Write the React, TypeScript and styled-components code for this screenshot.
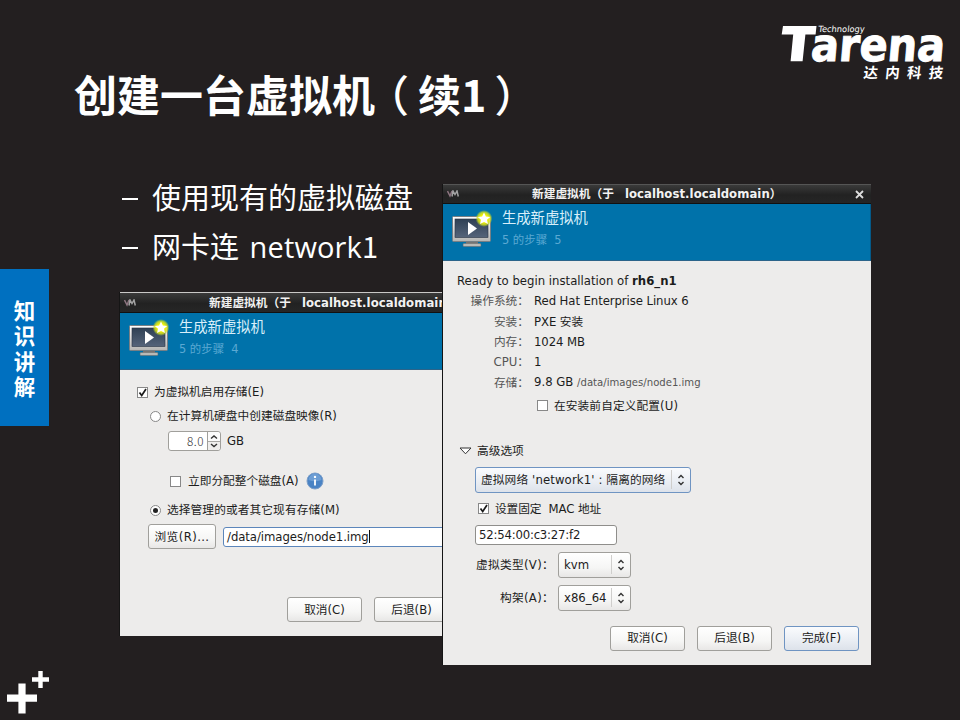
import React from 'react';
import styled, { createGlobalStyle } from 'styled-components';

const Global = createGlobalStyle`
  * { box-sizing: border-box; }
  body { margin: 0; background: #231f20; }
`;

const Slide = styled.div`
  position: relative;
  display: flex;
  width: 960px;
  height: 720px;
  overflow: hidden;
  background: #231f20;
  color: #fff;
  font-family: "Open Sans", "Noto Sans CJK SC", sans-serif;
`;

const Rail = styled.aside`
  display: flex;
  flex-direction: column;
  justify-content: space-between;
  width: 49px;
  padding: 269px 0 6px;
`;

const Tab = styled.div`
  display: flex;
  flex-direction: column;
  align-items: center;
  justify-content: center;
  height: 157px;
  background: #0070c0;
  font: 700 21.5px/25.5px "Noto Sans CJK SC", sans-serif;
`;

const Main = styled.main`
  flex: 1;
  padding: 0 11px 0 25px;
`;

const Header = styled.header`
  display: flex;
  justify-content: space-between;
  height: 171px;
`;

const Title = styled.h1`
  margin: 61px 0 0;
  font: 700 43px/64px "Noto Sans CJK SC", sans-serif;
  white-space: nowrap;
`;

const Nudge = styled.span<{ $x: number }>`
  margin-left: ${p => p.$x}px;
  margin-right: ${p => -p.$x}px;
  font-weight: 500;
`;

const Bullets = styled.ul`
  margin: 0;
  padding: 0 0 0 48px;
  list-style: none;
`;

const Bullet = styled.li`
  display: flex;
  align-items: center;
  height: 49px;
  gap: 14px;
  font-size: 29px;
  white-space: pre;
  &::before { content: ""; width: 16px; height: 2px; margin-top: 6px; background: #fff; }
`;

const Latin = styled.span`
  margin-left: 3px;
  letter-spacing: .15px;
`;

const Footed = styled.span`
  font-family: "Noto Sans CJK SC", sans-serif;
`;

const Window = styled.section<{ $x: number; $y: number; $h: number }>`
  position: absolute;
  left: ${p => p.$x}px;
  top: ${p => p.$y}px;
  width: 429px;
  height: ${p => p.$h}px;
  display: flex;
  flex-direction: column;
  overflow: hidden;
  border-left: 1px solid #151515;
  background: #edeceb;
  color: #1c1c1c;
  font: 11.7px/16px "DejaVu Sans", "Noto Sans CJK SC", sans-serif;
  white-space: pre;
`;

const Stack = styled.div`
  position: absolute;
  left: 0;
  top: 0;
  width: 871px;
  height: 720px;
  overflow: hidden;
`;

const TitleBar = styled.div<{ $lit?: boolean }>`
  display: flex;
  flex: none;
  align-items: center;
  height: ${p => (p.$lit ? 21 : 20)}px;
  padding: 0 7px 0 4px;
  border-top: 1px solid ${p => (p.$lit ? '#c9c8c7' : '#555')};
  border-bottom: 1px solid #111;
  background: linear-gradient(#3a3a3a, #222 55%, #262626);
  color: #f2f2f2;
  font-weight: 700;
`;

const Caption = styled.span`
  flex: 1;
  padding-left: 73px;
`;

const Host = styled.span`
  margin-left: 7px;
  letter-spacing: .05px;
`;

const Banner = styled.div`
  display: flex;
  flex: none;
  height: 57px;
  padding: 5px 0 0 8px;
  gap: 9px;
  border-bottom: 1px solid #2b648a;
  border-right: 1px solid #045988;
  background: #0072aa;
`;

const BannerText = styled.div`
  color: #d9effa;
  font-size: 14.3px;
  line-height: 18px;
`;

const Step = styled.div`
  margin-top: 4px;
  color: #5ba9d3;
  font-size: 11.4px;
  line-height: 18px;
`;

const Body = styled.div`
  flex: 1;
  padding-top: 10px;
`;

const Row = styled.div<{ $h: number; $x?: number; $top?: number; $gap?: number }>`
  display: flex;
  align-items: center;
  height: ${p => p.$h}px;
  margin-top: ${p => p.$top ?? 0}px;
  padding-left: ${p => p.$x ?? 0}px;
  gap: ${p => p.$gap ?? 0}px;
`;

const Label = styled.span<{ $w: number; $dim?: boolean }>`
  width: ${p => p.$w}px;
  text-align: right;
  color: ${p => (p.$dim ? '#555' : 'inherit')};
`;

const Txt = styled.span<{ $ls?: number }>`
  letter-spacing: ${p => p.$ls ?? 0}px;
`;

const Thin = styled.span`
  color: #333;
  font-weight: 300;
  font-family: "Noto Sans CJK SC", sans-serif;
  letter-spacing: .5px;
`;

const Small = styled.span`
  color: #555;
  font-size: 10.1px;
`;

const Control = styled.div<{ $w: number; $h: number; $blue?: boolean }>`
  display: flex;
  align-items: center;
  width: ${p => p.$w}px;
  height: ${p => p.$h}px;
  border: 1px solid ${p => (p.$blue ? '#6f94c2' : '#a09f9b')};
  border-radius: 3px;
  background: ${p => (p.$blue ? 'linear-gradient(#fafbfd, #e9edf3 60%, #dde2ea)' : 'linear-gradient(#fff, #f6f6f5 60%, #e8e7e6)')};
`;

const Select = styled(Control)`
  justify-content: space-between;
  padding-left: 5px;
`;

const Button = styled(Control)`
  justify-content: center;
  flex: none;
`;

const Input = styled(Control)`
  padding-left: 3px;
  border-color: ${p => (p.$blue ? '#5c86bb' : '#8f8e8b')};
  background: #fff;
`;

const Arrows = styled.span`
  display: flex;
  align-items: center;
  justify-content: center;
  width: 19px;
  height: 19px;
  border-left: 1px solid #cfcecc;
`;

const Check = styled.span`
  display: flex;
  width: 11px;
  height: 11px;
  border: 1px solid #888;
  background: #fff;
  svg { overflow: visible; }
`;

const Radio = styled(Check)`
  align-items: center;
  justify-content: center;
  border-radius: 50%;
`;

const Dot = styled.i`
  width: 5px;
  height: 5px;
  border-radius: 50%;
  background: #222;
`;

const Caret = styled.i`
  width: 1px;
  height: 13px;
  background: #111;
`;

const SpinBox = styled(Control)`
  justify-content: flex-end;
  background: #fff;
`;

const Spin = styled.span`
  display: flex;
  align-items: center;
  justify-content: center;
  width: 13px;
  height: 18px;
  margin-left: 3px;
  border-left: 1px solid #a09f9b;
  border-radius: 0 3px 3px 0;
  background: linear-gradient(#fbfbfb 48%, #a9a8a5 48%, #a9a8a5 54%, #efeeed 54%);
`;

const Marks = () => (
  <svg width="42" height="43" viewBox="0 0 42 43">
    <path d="M0 27.200h30M15 12.400v30" stroke="#fff" strokeWidth="7.2" />
    <path d="M25 8.5h17M33.5 0v17" stroke="#fff" strokeWidth="4.4" />
  </svg>
);

const Logo = () => (
  <svg width="170" height="66" viewBox="779 18 170 66" fill="#fff">
    <path d="M783 26h33.500l-.9 8.600h-10.200l-2.800 26.600h-12l2.600-26.600h-11.500z" />
    <text transform="translate(810 60.600) skewX(-5)" fontFamily="DejaVu Sans" fontSize="45.500" fontWeight="700" textLength="134" lengthAdjust="spacingAndGlyphs" stroke="#fff" strokeWidth="1">arena</text>
    <text transform="translate(818 32) skewX(-6)" fontFamily="DejaVu Sans" fontSize="8.500" textLength="46.500" lengthAdjust="spacingAndGlyphs">Technology</text>
    <text transform="translate(863 77.500) skewX(-6)" fontFamily="Noto Sans CJK SC" fontSize="14.500" fontWeight="700" letterSpacing="7.300">达内科技</text>
  </svg>
);

const VmMark = () => (
  <svg width="12" height="8" viewBox="0 0 12 8" fill="none" strokeWidth="1.500">
    <path d="M.5 1l2.500 5 2-5" stroke="#8d7580" />
    <path d="M5 6.500l1-5.500 2 3.500L10 1l1.300 5.500" stroke="#a3a3a3" />
  </svg>
);

const Monitor = () => (
  <svg width="42" height="40" viewBox="0 0 42 40">
    <defs>
      <radialGradient id="glow"><stop offset=".45" stopColor="#f3f500" /><stop offset=".75" stopColor="#d5e21c" stopOpacity=".8" /><stop offset="1" stopColor="#a9d038" stopOpacity="0" /></radialGradient>
      <linearGradient id="screen" x2="0" y2="1"><stop stopColor="#2f4054" /><stop offset="1" stopColor="#55647a" /></linearGradient>
      <linearGradient id="frame" x2="0" y2="1"><stop stopColor="#fff" /><stop offset="1" stopColor="#b5b5b3" /></linearGradient>
    </defs>
    <path d="M15 32h12v4H15z" fill="#747474" />
    <rect x="12" y="34.500" width="18" height="3" rx="1" fill="#b9b9b6" stroke="#666" strokeWidth=".5" />
    <rect x="1.500" y="7.500" width="38" height="25" rx="1" fill="url(#frame)" stroke="#777f85" />
    <rect x="4" y="10" width="33" height="18.500" fill="url(#screen)" stroke="#283445" strokeWidth=".6" />
    <path d="M17 13l9 6.500-9 6.500z" fill="#fff" />
    <circle cx="33" cy="9.500" r="8.500" fill="url(#glow)" />
    <path d="M33 3.500l1.900 3.900 4.300.5-3.200 2.900 1 4.300-4-2.200-4 2.200 1-4.300-3.200-2.900 4.300-.5z" fill="#fff" />
  </svg>
);

const UpDown = () => (
  <svg width="8" height="12" viewBox="0 0 8 12" fill="none" stroke="#333" strokeWidth="1.400">
    <path d="M1.500 4L4 1.500 6.500 4M1.500 8L4 10.500 6.500 8" />
  </svg>
);

const SpinArrows = () => (
  <svg width="8" height="14" viewBox="0 0 8 14" fill="none" stroke="#333" strokeWidth="1.400">
    <path d="M1 4.500L4 2l3 2.500M1 10l3 2.500L7 10" />
  </svg>
);

const Tick = () => (
  <svg width="9" height="9" viewBox="0 0 9 9" fill="none" stroke="#1a1a1a" strokeWidth="1.700">
    <path d="M1.500 4.500l2.200 3L8 1" />
  </svg>
);

const Info = () => (
  <svg width="18" height="18" viewBox="0 0 18 18">
    <circle cx="9" cy="9" r="8" fill="#4a83c4" stroke="#7d9fc9" />
    <path d="M2.500 8a6.500 6.500 0 0113 0q-6.500 2.500-13 0z" fill="#6c9dd4" />
    <path d="M9 7.500v6" stroke="#fff" strokeWidth="1.800" />
    <circle cx="9" cy="4.900" r="1.200" fill="#fff" />
  </svg>
);

const Close = () => (
  <svg width="9" height="9" viewBox="0 0 9 9" stroke="#ddd" strokeWidth="1.800">
    <path d="M1 1l7 7M8 1L1 8" />
  </svg>
);

const Expander = () => (
  <svg width="13" height="8" viewBox="0 0 13 8" fill="#fff" stroke="#333">
    <path d="M1 1h11L6.500 6.800z" />
  </svg>
);

const WindowTop = ({ step, lit }: { step: number; lit?: boolean }) => (
  <>
    <TitleBar $lit={lit}>
      <VmMark />
      <Caption>新建虚拟机（于 <Host>localhost.localdomain）</Host></Caption>
      <Close />
    </TitleBar>
    <Banner>
      <Monitor />
      <BannerText>
        生成新虚拟机
        <Step>5 的步骤  {step}</Step>
      </BannerText>
    </Banner>
  </>
);

const details: [string, string][] = [
  ['操作系统：', 'Red Hat Enterprise Linux 6'],
  ['安装：', 'PXE 安装'],
  ['内存：', '1024 MB'],
  ['CPU：', '1'],
];

export default function App() {
  return (
    <>
      <Global />
      <Slide>
        <Rail>
          <Tab><span>知</span><span>识</span><span>讲</span><span>解</span></Tab>
          <Row $h={43} $x={7}><Marks /></Row>
        </Rail>
        <Main>
          <Header>
            <Title>创建一台虚拟机<Nudge $x={-9}>（</Nudge>续1<Nudge $x={8}>）</Nudge></Title>
            <Row $h={66} $top={18}><Logo /></Row>
          </Header>
          <Bullets>
            <Bullet>使用现有的虚拟磁盘</Bullet>
            <Bullet><span>网卡连 <Latin>network<Footed>1</Footed></Latin></span></Bullet>
          </Bullets>
        </Main>

        <Stack>
          <Window $x={119} $y={292} $h={344}>
            <WindowTop step={4} lit />
            <Body>
              <Row $h={24} $x={17} $gap={6}><Check><Tick /></Check><Txt>为虚拟机启用存储(E)</Txt></Row>
              <Row $h={24} $x={30} $gap={6}><Radio /><Txt $ls={0.05}>在计算机硬盘中创建磁盘映像(R)</Txt></Row>
              <Row $h={20} $x={48} $top={3} $gap={6}>
                <SpinBox $w={53} $h={20}><Thin>8.0</Thin><Spin><SpinArrows /></Spin></SpinBox>
                <span>GB</span>
              </Row>
              <Row $h={20} $x={50} $top={20} $gap={7}><Check /><Txt>立即分配整个磁盘(A)</Txt><Info /></Row>
              <Row $h={20} $x={30} $top={9} $gap={6}><Radio><Dot /></Radio><Txt $ls={0.1}>选择管理的或者其它现有存储(M)</Txt></Row>
              <Row $h={25} $x={28} $top={4} $gap={7}>
                <Button $w={68} $h={25}><Txt $ls={0.4}>浏览(R)...</Txt></Button>
                <Input $w={260} $h={20} $blue><Txt $ls={-0.06}>/data/images/node1.img</Txt><Caret /></Input>
              </Row>
              <Row $h={25} $x={167} $top={48} $gap={12}>
                <Button $w={75} $h={25}>取消(C)</Button>
                <Button $w={75} $h={25}>后退(B)</Button>
              </Row>
            </Body>
          </Window>

          <Window $x={442} $y={184} $h={481}>
            <WindowTop step={5} />
            <Body>
              <Row $h={20} $x={14}><Txt>Ready to begin installation of <b>rh6_n1</b></Txt></Row>
              {details.map(([name, value]) => (
                <Row key={name} $h={20.4} $gap={5}><Label $w={86} $dim>{name}</Label><Txt $ls={-0.08}>{value}</Txt></Row>
              ))}
              <Row $h={20.4} $gap={5}><Label $w={86} $dim>存储：</Label><span>9.8 GB <Small>/data/images/node1.img</Small></span></Row>
              <Row $h={20} $x={94} $top={3} $gap={6}><Check /><Txt $ls={0.1}>在安装前自定义配置(U)</Txt></Row>
              <Row $h={20} $x={16} $top={25} $gap={5}><Expander />高级选项</Row>
              <Row $h={26} $x={32} $top={6}>
                <Select $w={216} $h={26} $blue><Txt $ls={0.12}>虚拟网络 'network1' : 隔离的网络</Txt><Arrows><UpDown /></Arrows></Select>
              </Row>
              <Row $h={20} $x={35} $top={6} $gap={6}><Check><Tick /></Check><Txt $ls={-0.1}>设置固定  MAC 地址</Txt></Row>
              <Row $h={20} $x={32} $top={6}><Input $w={142} $h={20}><Txt $ls={-0.2}>52:54:00:c3:27:f2</Txt></Input></Row>
              <Row $h={26} $top={7} $gap={4}><Label $w={111}><Txt $ls={0.3}>虚拟类型(V)：</Txt></Label><Select $w={73} $h={26}>kvm<Arrows><UpDown /></Arrows></Select></Row>
              <Row $h={26} $top={7} $gap={4}><Label $w={111}><Txt $ls={0.3}>构架(A)：</Txt></Label><Select $w={73} $h={26}>x86_64<Arrows><UpDown /></Arrows></Select></Row>
              <Row $h={25} $x={167} $top={15} $gap={12}>
                <Button $w={75} $h={25}>取消(C)</Button>
                <Button $w={75} $h={25}>后退(B)</Button>
                <Button $w={75} $h={25} $blue>完成(F)</Button>
              </Row>
            </Body>
          </Window>
        </Stack>
      </Slide>
    </>
  );
}
